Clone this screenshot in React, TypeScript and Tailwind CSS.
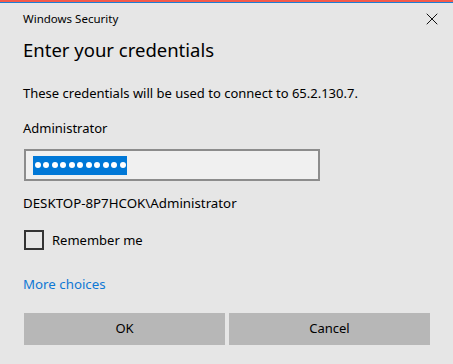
import { X } from 'lucide-react'

export default function App() {
  const dots = Array.from({ length: 11 })

  return (
    <div className="w-[453px] h-[364px] bg-[#e6e6e6] text-[#000] font-['Segoe_UI','Noto_Sans',sans-serif] overflow-hidden">
      {/* accent border */}
      <div className="h-[2px] bg-[#f55a4a]" />
      <div className="h-[1px] bg-[#1b7fd6]" />

      {/* title bar */}
      <div className="h-[32px] flex items-center justify-between pl-[23px] pr-[11px]">
        <span className="text-[11.5px]">Windows Security</span>
        <X size={20} strokeWidth={1.2} className="text-[#111]" />
      </div>

      <div className="px-[23px]">
        <div className="mt-[1px] h-[28px] leading-[28px] text-[18.5px]">Enter your credentials</div>

        <div className="mt-[19px] h-[20px] leading-[20px] text-[13px]">
          These credentials will be used to connect to 65.2.130.7.
        </div>

        <div className="mt-[15px] h-[20px] leading-[20px] text-[13px]">Administrator</div>

        {/* password box */}
        <div className="mt-[11px] ml-[1px] w-[296px] h-[32px] border-2 border-[#8c8c8c] bg-[#f0f0f0] flex items-center pl-[7px]">
          <div className="h-[19px] bg-[#0078d7] flex items-center gap-[2.5px] px-[1.5px]">
            {dots.map((_, i) => (
              <div key={i} className="w-[6px] h-[6px] rounded-full bg-white" />
            ))}
          </div>
        </div>

        <div className="mt-[12px] h-[20px] leading-[20px] text-[13.3px]">DESKTOP-8P7HCOK\Administrator</div>

        {/* remember me */}
        <div className="mt-[17px] h-[20px] flex items-center gap-[8px] ml-[1px]">
          <div className="w-[20px] h-[20px] border-2 border-[#333]" />
          <span className="text-[13px] leading-[20px]">Remember me</span>
        </div>

        <div className="mt-[24px] h-[20px] leading-[20px] text-[13.3px] text-[#0f78d4]">More choices</div>

        {/* buttons */}
        <div className="mt-[19px] ml-[1px] flex gap-[4px] w-[406px]">
          <button className="flex-1 h-[32px] bg-[#b7b7b7] text-[13px]">OK</button>
          <button className="flex-1 h-[32px] bg-[#b7b7b7] text-[13px]">Cancel</button>
        </div>
      </div>
    </div>
  )
}
